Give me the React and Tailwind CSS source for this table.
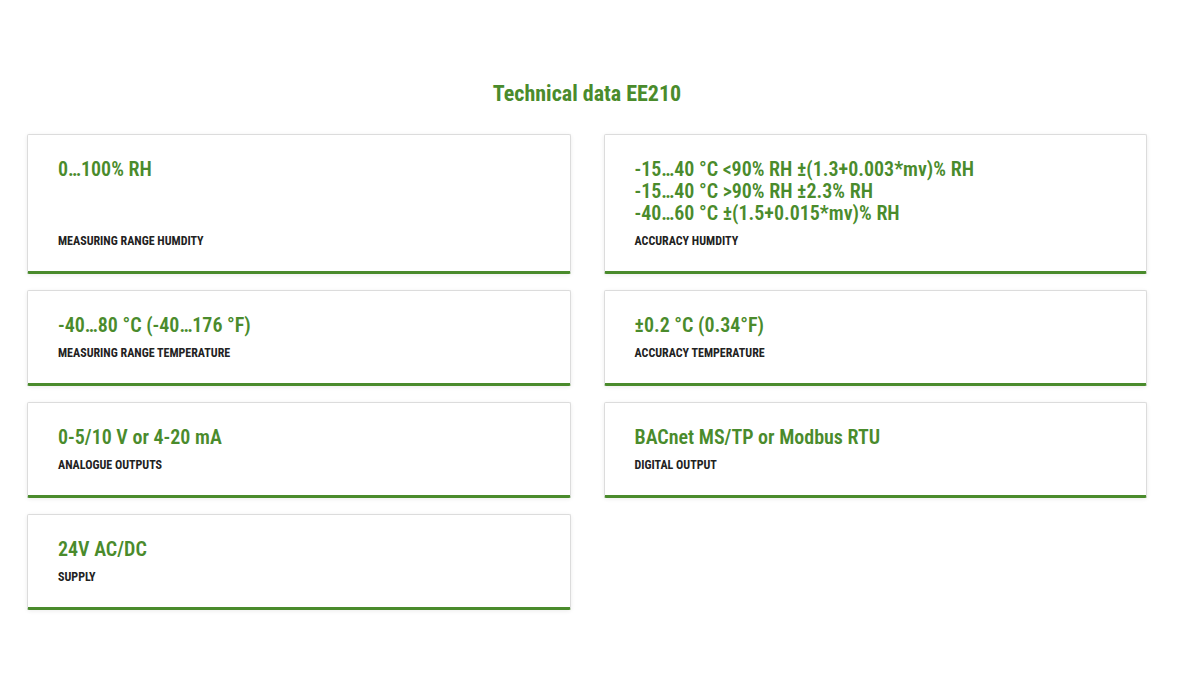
import React from 'react';

const font = { fontFamily: '"Roboto Condensed", "Liberation Sans Narrow", "DejaVu Sans Condensed", "DejaVu Sans", sans-serif' };

const Card = ({ lines, label }) => (
    <div className="flex flex-col bg-white border border-[#dcdcdc] border-b-[3px] border-b-[#4a8b2c] rounded-[2px] shadow-[0_1px_4px_rgba(0,0,0,0.08)] px-[30px] pt-[23px] pb-[22px]">
        <div className="text-[20px] leading-[22px] font-semibold text-[#4a8b2c]">
            {lines.map((l, i) => (
                <div key={i}>{l}</div>
            ))}
        </div>
        <div className="mt-auto pt-[9px] text-[12px] leading-[16px] font-bold uppercase text-[#222]">
            {label}
        </div>
    </div>
);

const App = () => {
    return (
        <div className="w-[1183px] h-[676px] bg-white" style={font}>
            <div className="ml-[27px] w-[1120px] pt-[80px]">
                <h2 className="text-center text-[22px] leading-[28px] font-bold text-[#4a8b2c] mb-[26px]">
                    Technical data EE210
                </h2>
                <div className="grid grid-cols-2 gap-x-[33px] gap-y-[16px]">
                    <Card lines={["0…100% RH"]} label="Measuring range humdity" />
                    <Card
                        lines={[
                            "-15…40 °C <90% RH ±(1.3+0.003*mv)% RH",
                            "-15…40 °C >90% RH ±2.3% RH",
                            "-40…60 °C ±(1.5+0.015*mv)% RH",
                        ]}
                        label="Accuracy humdity"
                    />
                    <Card lines={["-40…80 °C (-40…176 °F)"]} label="Measuring range temperature" />
                    <Card lines={["±0.2 °C (0.34°F)"]} label="Accuracy temperature" />
                    <Card lines={["0-5/10 V or 4-20 mA"]} label="Analogue outputs" />
                    <Card lines={["BACnet MS/TP or Modbus RTU"]} label="Digital output" />
                    <Card lines={["24V AC/DC"]} label="Supply" />
                </div>
            </div>
        </div>
    );
};

export default App;
